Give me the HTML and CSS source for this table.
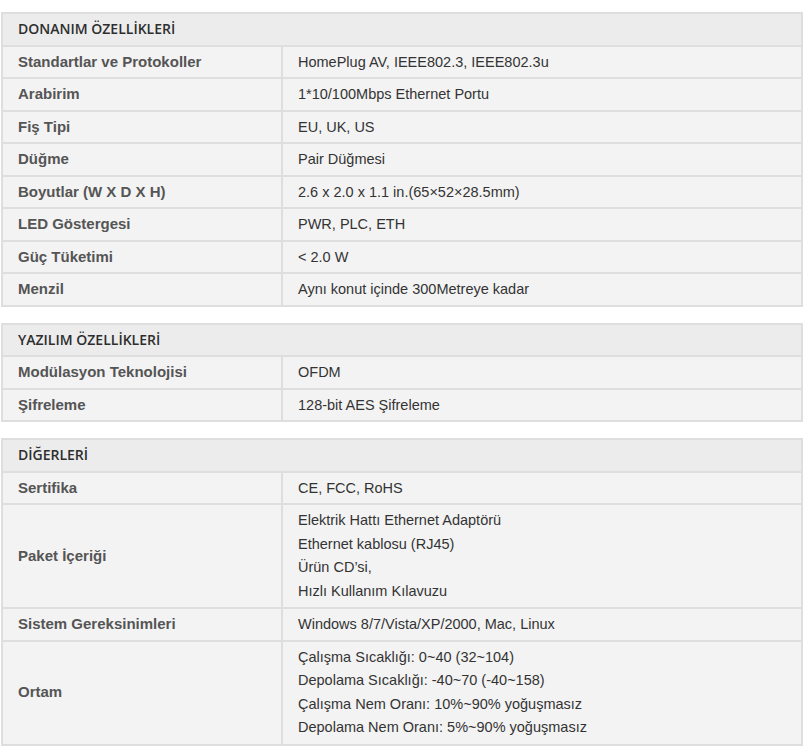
FILE: index.html
```html
<!DOCTYPE html>
<html lang="tr">
<head>
<meta charset="utf-8">
<title>Özellikler</title>
<link rel="stylesheet" href="styles.css">
</head>
<body>
<div class="specs">
  <table class="spec-table">
    <colgroup><col class="col-label"><col class="col-value"></colgroup>
    <tr class="head"><th colspan="2">DONANIM ÖZELLİKLERİ</th></tr>
    <tr><td class="label">Standartlar ve Protokoller</td><td class="value">HomePlug AV, IEEE802.3, IEEE802.3u</td></tr>
    <tr><td class="label">Arabirim</td><td class="value">1*10/100Mbps Ethernet Portu</td></tr>
    <tr><td class="label">Fiş Tipi</td><td class="value">EU, UK, US</td></tr>
    <tr><td class="label">Düğme</td><td class="value">Pair Düğmesi</td></tr>
    <tr><td class="label">Boyutlar (W X D X H)</td><td class="value">2.6 x 2.0 x 1.1 in.(65×52×28.5mm)</td></tr>
    <tr><td class="label">LED Göstergesi</td><td class="value">PWR, PLC, ETH</td></tr>
    <tr><td class="label">Güç Tüketimi</td><td class="value">&lt; 2.0 W</td></tr>
    <tr><td class="label">Menzil</td><td class="value">Aynı konut içinde 300Metreye kadar</td></tr>
  </table>

  <table class="spec-table">
    <colgroup><col class="col-label"><col class="col-value"></colgroup>
    <tr class="head"><th colspan="2">YAZILIM ÖZELLİKLERİ</th></tr>
    <tr><td class="label">Modülasyon Teknolojisi</td><td class="value">OFDM</td></tr>
    <tr><td class="label">Şifreleme</td><td class="value">128-bit AES Şifreleme</td></tr>
  </table>

  <table class="spec-table">
    <colgroup><col class="col-label"><col class="col-value"></colgroup>
    <tr class="head"><th colspan="2">DİĞERLERİ</th></tr>
    <tr><td class="label">Sertifika</td><td class="value">CE, FCC, RoHS</td></tr>
    <tr><td class="label">Paket İçeriği</td><td class="value multi">Elektrik Hattı Ethernet Adaptörü<br>Ethernet kablosu (RJ45)<br>Ürün CD’si,<br>Hızlı Kullanım Kılavuzu</td></tr>
    <tr><td class="label">Sistem Gereksinimleri</td><td class="value">Windows 8/7/Vista/XP/2000, Mac, Linux</td></tr>
    <tr><td class="label">Ortam</td><td class="value multi">Çalışma Sıcaklığı: 0~40 (32~104)<br>Depolama Sıcaklığı: -40~70 (-40~158)<br>Çalışma Nem Oranı: 10%~90% yoğuşmasız<br>Depolama Nem Oranı: 5%~90% yoğuşmasız</td></tr>
  </table>
</div>
</body>
</html>
```

FILE: styles.css
```css
html, body {
  margin: 0;
  padding: 0;
  background: #ffffff;
}

.specs {
  padding: 12px 2px 0 1px;
  display: flex;
  flex-direction: column;
  gap: 16px;
}

.spec-table {
  width: 802px;
  border-collapse: collapse;
  table-layout: fixed;
  font-family: "Liberation Sans", Arial, sans-serif;
  font-size: 14.5px;
}

.col-label {
  width: 280px;
}

.spec-table th,
.spec-table td {
  border: 2px solid #dedede;
  padding: 4px 15px;
  line-height: 22.5px;
  text-align: left;
  vertical-align: middle;
}

.head th {
  background: #ececec;
  font-family: "Open Sans", sans-serif;
  font-weight: 600;
  font-size: 14px;
  color: #2e2e2e;
}

.label {
  background: #f3f3f3;
  font-weight: bold;
  font-size: 15px;
  color: #555555;
}

.value {
  background: #f3f3f3;
  color: #333333;
}

.value.multi {
  line-height: 23.5px;
}
```
